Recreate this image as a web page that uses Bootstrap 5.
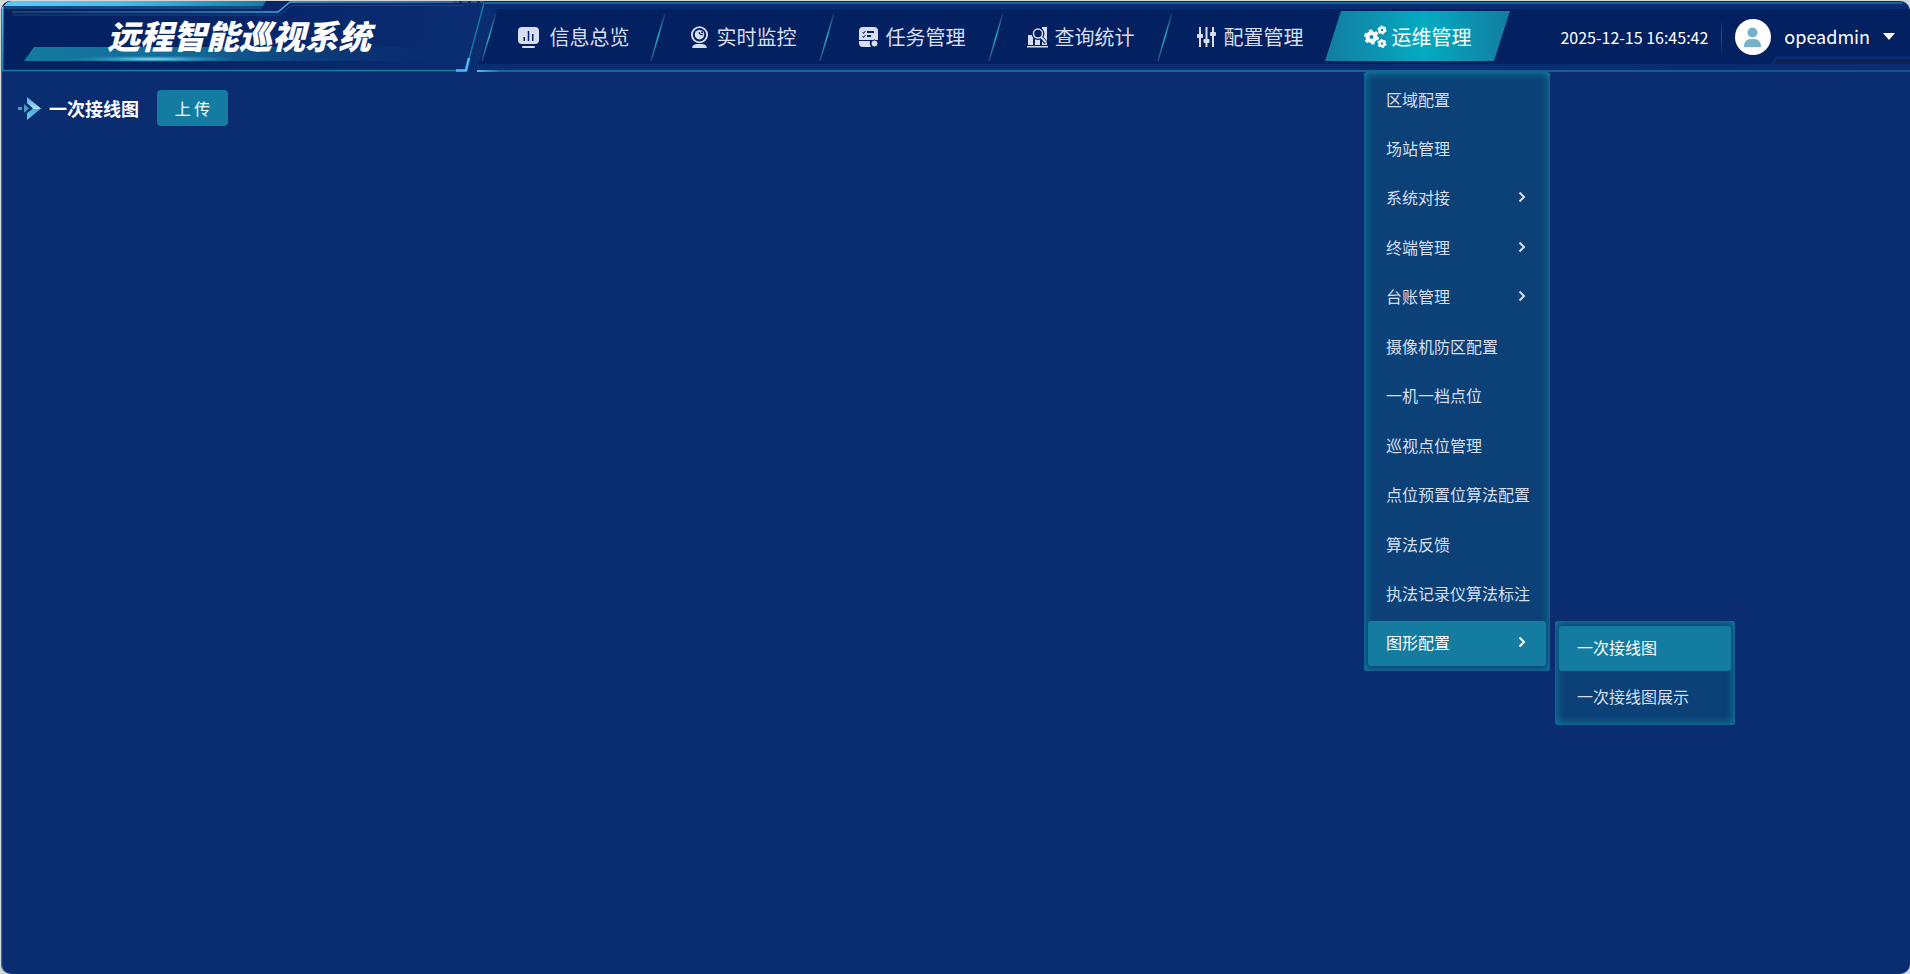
<!DOCTYPE html>
<html lang="zh-CN">
<head>
<meta charset="utf-8">
<meta name="viewport" content="width=device-width, initial-scale=1">
<title>远程智能巡视系统</title>
<link href="https://cdn.jsdelivr.net/npm/bootstrap@5.3.0/dist/css/bootstrap.min.css" rel="stylesheet">
<style>
:root{--ground:#0a2c71;--deep:#032060;--teal:#137ca0;--edge:#13689b;--soft:#d8def0}
body{font-family:"Noto Sans CJK SC","Noto Sans",sans-serif;font-size:16px;background:#d3d8d9;color:#fff;overflow-x:hidden}
a{color:inherit;text-decoration:none}
.shell{margin:1px 0 0 1px;min-height:calc(100vh - 1px);background:var(--ground);border-radius:10px;box-shadow:inset 1px 0 #3d6f9a}
.top-bar{height:71px}
.brand-box{width:484px;height:71px;margin-left:-1px}
.brand-art{position:absolute;left:0;top:0}
.brand-name{position:relative;font-size:33px;line-height:40px;font-weight:900;font-style:italic;margin:0;padding:14px 0 0 107px;white-space:nowrap}
.nav-box{margin-left:-7px;padding-left:12px;min-width:0;position:relative}
.nav-box::before{content:"";position:absolute;inset:8px 0 8px 2px;background:var(--deep);clip-path:polygon(18px 0,100% 0,100% 100%,0 100%)}
.nav-box::after{content:"";position:absolute;left:0;right:0;bottom:0;height:2px;background:linear-gradient(90deg,#4fbcf5,var(--edge) 24px,#13689b 60%,#155090)}
.top-line{position:absolute;left:7px;right:8px;top:1px;height:2px;background:var(--edge)}
.main-nav{position:relative;z-index:2;height:71px}
.nav-slot{width:169px;position:relative}
.nav-slot>a{height:50px;margin-top:10px;padding-top:2px;font-size:20px;line-height:30px;color:var(--soft);gap:7px;position:relative}
.nav-slot>a svg{width:21px;height:22px;flex:none}
.nav-slot>a.wide-gap{gap:11px}
.slash{position:absolute;top:12px;left:-8px;width:16px;height:48px}
.nav-slot>a.current{color:#fff;margin-left:-9px;margin-right:-7px;gap:5px;background:linear-gradient(90deg,#137ca0,#03abc1 54%,#137ca0);clip-path:polygon(16px 0,100% 0,calc(100% - 16px) 100%,0 100%)}
.nav-slot>a.current svg{width:23px;height:24px}
.user-box{position:relative;z-index:1;padding-right:15px;height:71px}
.v-rule{width:1px;height:36px;background:linear-gradient(transparent,#2a4f92,transparent);margin:0 13px}
.user-btn{border:0;background:none;color:#fff;padding:0;font-size:18px;gap:13px}
.notch{position:absolute;right:0;bottom:8px;width:139px;height:8px}
.drop-panel{background:#0b4176;border:0;border-radius:3px;box-shadow:inset 0 0 9px 1px #1380a0;padding:5px 4px;color:var(--soft);margin:0}
.dropdown-menu.ops-menu{display:flex;flex-direction:column;justify-content:space-between;left:30px;top:71px;width:186px;min-height:599px}
.drop-panel .dropdown-item{height:45px;padding:0 18px 2px;border-radius:3px;color:var(--soft);display:flex;align-items:center;justify-content:space-between;line-height:24px}
.drop-panel .dropdown-item svg{margin-right:2px;position:static}
.drop-panel .dropdown-item:hover,.drop-panel .dropdown-item.active{background:var(--teal);color:#fff}
.sub-menu{position:absolute;left:187px;top:0;width:180px;min-width:0;display:flex;flex-direction:column;gap:4px}
.sub-menu li,.ops-menu li{list-style:none}
.page-head{padding:18px 17px}
.page-head h1{font-size:18px;line-height:28px;font-weight:700;margin:0}
.upload-btn,.upload-btn:hover{background:var(--teal);border:0;color:#fff;height:36px;width:71px;padding:0;border-radius:4px;margin-left:18px}
</style>
</head>
<body>
<div class="shell">
<header class="top-bar d-flex">
  <div class="brand-box position-relative flex-shrink-0">
    <svg class="brand-art" width="484" height="71" viewBox="0 1 484 71" aria-hidden="true">
      <defs>
        <linearGradient id="gPanel"><stop offset="0" stop-color="#032060"/><stop offset="1" stop-color="#0a2c71"/></linearGradient>
        <linearGradient id="gTop"><stop offset="0" stop-color="#58c8fa"/><stop offset=".45" stop-color="#4bb9ea"/><stop offset="1" stop-color="#137ca0"/></linearGradient>
        <linearGradient id="gBar"><stop offset="0" stop-color="#137ca0"/><stop offset=".4" stop-color="#116798"/><stop offset="1" stop-color="#0a2c71" stop-opacity="0"/></linearGradient>
        <linearGradient id="gLine" gradientUnits="userSpaceOnUse" x1="12" y1="0" x2="455" y2="0"><stop offset="0" stop-color="#2c4a70"/><stop offset=".35" stop-color="#2b70a0"/><stop offset=".62" stop-color="#4aa6d4"/><stop offset="1" stop-color="#3a78aa"/></linearGradient>
        <linearGradient id="gLeft" x2="0" y2="1"><stop offset="0" stop-color="#58c8fa"/><stop offset="1" stop-color="#137ca0"/></linearGradient>
        <radialGradient id="gGlow"><stop offset="0" stop-color="#a5def0"/><stop offset=".4" stop-color="#4db4d3" stop-opacity=".7"/><stop offset="1" stop-color="#2b93b8" stop-opacity="0"/></radialGradient>
      </defs>
      <path d="M2 72V9Q3 1 11 1H484V4L466 71H2Z" fill="url(#gPanel)"/>
      <path d="M3 9Q5 1 12 1H266L263 6H3Z" fill="url(#gTop)"/>
      <path d="M3 6H263L261 9H3Z" fill="#1b568e" opacity=".7"/>
      <path d="M12 12H278L290 2H453" fill="none" stroke="url(#gLine)" stroke-width="1.5"/>
      <path d="M12 15H280L291 5.500H463" fill="none" stroke="#174783"/>
      <path d="M453 2H484" stroke="#4b78a0" stroke-dasharray="6 3"/>
      <rect x="2" y="7" width="1.500" height="64" fill="url(#gLeft)"/>
      <path d="M2 70.500H466L484 3" fill="none" stroke="#137c9e" stroke-width="1.500"/>
      <path d="M456 70.500H466L469 58" fill="none" stroke="#50b7fa" stroke-width="2.500"/>
      <path d="M34 47H465V61H24Z" fill="url(#gBar)"/>
      <ellipse cx="152" cy="59" rx="84" ry="3.500" fill="url(#gGlow)"/>
    </svg>
    <div class="brand-name">远程智能巡视系统</div>
  </div>
  <div class="nav-box d-flex flex-grow-1">
    <div class="top-line"></div>
    <nav aria-label="主导航">
    <ul class="main-nav d-flex list-unstyled m-0">
      <li class="nav-slot">
        <svg class="slash" viewBox="0 0 16 48"><defs><linearGradient id="gSlash" gradientUnits="userSpaceOnUse" x1="0" y1="0" x2="0" y2="48"><stop offset="0" stop-color="#7b9ac0" stop-opacity=".1"/><stop offset=".5" stop-color="#19b5cd"/><stop offset="1" stop-color="#7b9ac0" stop-opacity=".25"/></linearGradient></defs><path d="M15 0 1 48" stroke="url(#gSlash)" stroke-width="1.500"/></svg>
        <a class="wide-gap d-flex align-items-center justify-content-center" href="#">
          <svg viewBox="0 0 21 22" fill="currentColor"><path fill-rule="evenodd" d="M4 1h13q4 0 4 4v9q0 4-4 4H4q-4 0-4-4V5q0-4 4-4ZM5.500 11v4H7v-4Zm4.250-6v10h1.500V5ZM14 8v7h1.500V8Z"/><rect x="4" y="20" width="13" height="2" rx="1"/></svg>信息总览</a>
      </li>
      <li class="nav-slot">
        <svg class="slash" viewBox="0 0 16 48"><path d="M15 0 1 48" stroke="url(#gSlash)" stroke-width="1.500"/></svg>
        <a class="d-flex align-items-center justify-content-center" href="#">
          <svg viewBox="0 0 20 24" fill="currentColor"><circle cx="10" cy="9.500" r="8.300" fill="none" stroke="currentColor" stroke-width="2"/><circle cx="10" cy="9.500" r="5.200"/><path d="M9.500 6.500q.5 3.500 4.500 3" fill="none" stroke="#032060" stroke-width="1.200"/><circle cx="12.800" cy="6.800" r="1.200" fill="#032060"/><path d="M2 24q0-4 5-4.500h6q5 .5 5 4.500Z"/></svg>实时监控</a>
      </li>
      <li class="nav-slot">
        <svg class="slash" viewBox="0 0 16 48"><path d="M15 0 1 48" stroke="url(#gSlash)" stroke-width="1.500"/></svg>
        <a class="d-flex align-items-center justify-content-center" href="#">
          <svg viewBox="0 0 21 22" fill="currentColor"><path fill-rule="evenodd" d="M5 1h11q4 0 4 4v9H1V5q0-4 4-4ZM4 6l1.500 2L8 5H7L5.500 6.500ZM9 5v2h7V5ZM4 10l1.500 2L8 9H7l-1.500 1.500ZM9 9v2h4V9Z"/><path d="M1 15h11q-1 3 1 6H5q-4 0-4-4Z"/><circle cx="16.500" cy="17.500" r="3.500" stroke="#032060"/></svg>任务管理</a>
      </li>
      <li class="nav-slot">
        <svg class="slash" viewBox="0 0 16 48"><path d="M15 0 1 48" stroke="url(#gSlash)" stroke-width="1.500"/></svg>
        <a class="d-flex align-items-center justify-content-center" href="#">
          <svg viewBox="0 0 21 22" fill="currentColor"><path d="M1 9h5v10H1ZM8 13h5v6H8ZM15 1h5v18h-5ZM0 20h21v1.500H0Z"/><circle cx="11" cy="7.500" r="4.500" fill="#032060" stroke="#032060" stroke-width="4"/><path d="m14 11 5 6" stroke="#032060" stroke-width="4"/><circle cx="11" cy="7.500" r="4.500" fill="#032060" stroke="currentColor" stroke-width="1.500"/><path d="m14 11 5 5.500" stroke="currentColor" stroke-width="2"/></svg>查询统计</a>
      </li>
      <li class="nav-slot">
        <svg class="slash" viewBox="0 0 16 48"><path d="M15 0 1 48" stroke="url(#gSlash)" stroke-width="1.500"/></svg>
        <a class="d-flex align-items-center justify-content-center" href="#">
          <svg viewBox="0 0 21 22" fill="currentColor"><path d="M3 1h2v20H3ZM9.500 1h2v20h-2ZM16 1h2v20h-2Z"/><rect x="1" y="8" width="6" height="4" rx="1"/><rect x="7.500" y="13" width="6" height="4" rx="1"/><rect x="14" y="6" width="6" height="4" rx="1"/></svg>配置管理</a>
      </li>
      <li class="nav-slot">
        <a class="current d-flex align-items-center justify-content-center" href="#" aria-current="page">
          <svg viewBox="0 0 23 24" fill="none" stroke="currentColor"><circle cx="7.500" cy="12" r="4" stroke-width="4"/><circle cx="7.500" cy="12" r="6.500" stroke-width="2" stroke-dasharray="3.400 3.400"/><circle cx="18" cy="5" r="2.500" stroke-width="2.500"/><circle cx="18" cy="5" r="4" stroke-width="1.200" stroke-dasharray="2 2.200"/><circle cx="18" cy="18.500" r="2.500" stroke-width="2.500"/><circle cx="18" cy="18.500" r="4" stroke-width="1.200" stroke-dasharray="2 2.200"/></svg>运维管理</a>
        <ul class="dropdown-menu show drop-panel ops-menu">
          <li><a class="dropdown-item" href="#">区域配置</a></li>
          <li><a class="dropdown-item" href="#">场站管理</a></li>
          <li><a class="dropdown-item" href="#">系统对接<svg width="8" height="12" viewBox="0 0 8 12" fill="none" stroke="currentColor" stroke-width="2"><path d="m1.500 1.500 4.500 4.500-4.500 4.500"/></svg></a></li>
          <li><a class="dropdown-item" href="#">终端管理<svg width="8" height="12" viewBox="0 0 8 12" fill="none" stroke="currentColor" stroke-width="2"><path d="m1.500 1.500 4.500 4.500-4.500 4.500"/></svg></a></li>
          <li><a class="dropdown-item" href="#">台账管理<svg width="8" height="12" viewBox="0 0 8 12" fill="none" stroke="currentColor" stroke-width="2"><path d="m1.500 1.500 4.500 4.500-4.500 4.500"/></svg></a></li>
          <li><a class="dropdown-item" href="#">摄像机防区配置</a></li>
          <li><a class="dropdown-item" href="#">一机一档点位</a></li>
          <li><a class="dropdown-item" href="#">巡视点位管理</a></li>
          <li><a class="dropdown-item" href="#">点位预置位算法配置</a></li>
          <li><a class="dropdown-item" href="#">算法反馈</a></li>
          <li><a class="dropdown-item" href="#">执法记录仪算法标注</a></li>
          <li class="position-relative"><a class="dropdown-item active" href="#">图形配置<svg width="8" height="12" viewBox="0 0 8 12" fill="none" stroke="currentColor" stroke-width="2"><path d="m1.500 1.500 4.500 4.500-4.500 4.500"/></svg></a>
            <ul class="drop-panel sub-menu">
              <li><a class="dropdown-item active" href="#">一次接线图</a></li>
              <li><a class="dropdown-item" href="#">一次接线图展示</a></li>
            </ul>
          </li>
        </ul>
      </li>
    </ul>
    </nav>
    <svg class="notch" viewBox="0 0 139 8" preserveAspectRatio="none" aria-hidden="true"><path d="M0 8 5 0H139V8Z" fill="#0a2c71"/><path d="M3 8 6 3H139V8Z" fill="#10224d"/></svg>
    <div class="user-box d-flex align-items-center ms-auto text-nowrap">
      <time datetime="2025-12-15T16:45:42">2025-12-15 16:45:42</time>
      <span class="v-rule"></span>
      <button type="button" class="user-btn d-flex align-items-center">
        <svg width="36" height="36" viewBox="0 0 36 36"><circle cx="18" cy="18" r="18" fill="#fff"/><circle cx="17.500" cy="13.500" r="5" fill="#74b2cc"/><path d="M9 28q0-8 7-8h3q7 0 7 8Z" fill="#74b2cc"/></svg>
        <span>opeadmin</span>
        <svg width="12" height="7" viewBox="0 0 12 7"><path d="M0 0H12L6 7Z" fill="#fff"/></svg>
      </button>
    </div>
  </div>
</header>
<main>
  <div class="page-head d-flex align-items-center">
    <svg width="23" height="23" viewBox="0 0 23 23" aria-hidden="true"><defs><linearGradient id="gArrow" x2="0" y2="1"><stop offset="0" stop-color="#4bb0dc"/><stop offset=".5" stop-color="#a5e1f7"/><stop offset=".52" stop-color="#48acd9"/><stop offset="1" stop-color="#72c8ec"/></linearGradient></defs><path d="M9 0 23 11.500 9 23V16l6-4.500L9 6Z" fill="url(#gArrow)"/><path d="M6 7l5 4.500L6 16Z" fill="#469fbe"/><path d="M0 10h4v3H0Z" fill="#4c9dbc"/></svg>
    <h1 class="ms-2">一次接线图</h1>
    <button type="button" class="btn upload-btn">上 传</button>
  </div>
</main>
</div>
<script src="https://cdn.jsdelivr.net/npm/bootstrap@5.3.0/dist/js/bootstrap.bundle.min.js"></script>
</body>
</html>
